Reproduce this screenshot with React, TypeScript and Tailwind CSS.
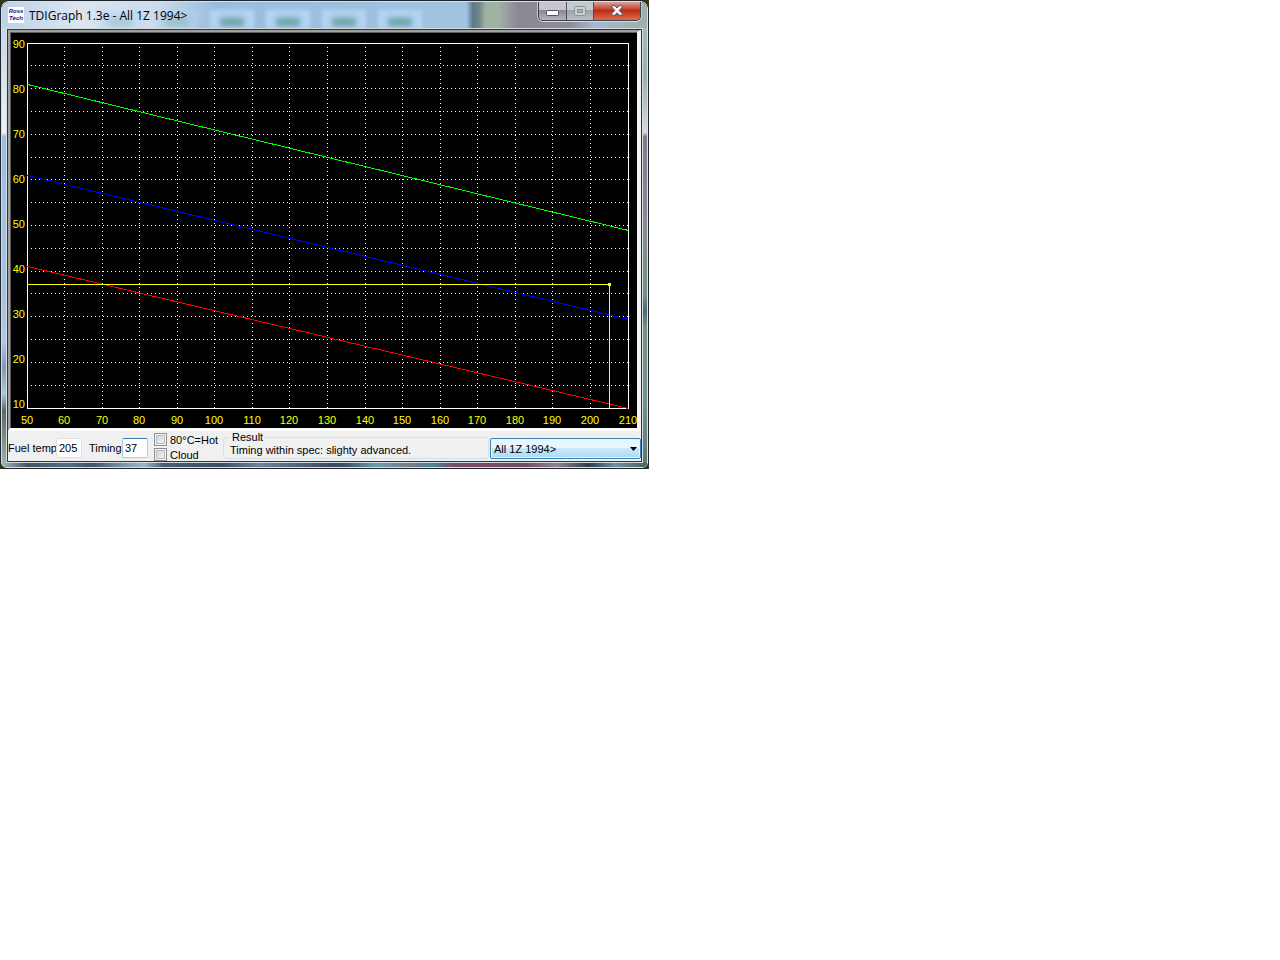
import React, { useState } from 'react';

const PLOT = { left: 16, top: 10, right: 617, bottom: 375 };

const toX = (temp: number) =>
  Math.floor(PLOT.left + ((temp - 50) * (PLOT.right - PLOT.left)) / 160) + 0.5;
const toY = (timing: number) =>
  Math.floor(PLOT.top + ((90 - timing) * (PLOT.bottom - PLOT.top)) / 80) + 0.5;

const range = (from: number, to: number, step: number) => {
  const values: number[] = [];
  for (let v = from; v <= to; v += step) values.push(v);
  return values;
};

const LIMITS = [
  { name: 'advanced', start: 81, end: 49, color: '#00ff00' },
  { name: 'nominal', start: 61, end: 29.5, color: '#0000ff' },
  { name: 'retarded', start: 41, end: 10, color: '#ff0000' },
];

const ENGINES = ['All 1Z 1994>', 'AHU 1996>', 'ALH 1999>'];

const limitAt = (index: number, temp: number) => {
  const { start, end } = LIMITS[index];
  return start + ((end - start) * (temp - 50)) / 160;
};

const getResult = (temp: number, timing: number) => {
  if (timing > limitAt(0, temp)) return 'Timing out of spec: too advanced.';
  if (timing < limitAt(2, temp)) return 'Timing out of spec: too retarded.';
  return timing > limitAt(1, temp)
    ? 'Timing within spec: slighty advanced.'
    : 'Timing within spec: slighty retarded.';
};

interface TimingChartProps {
  temp: number;
  timing: number;
}

const TimingChart: React.FC<TimingChartProps> = ({ temp, timing }) => {
  const px = toX(temp);
  const py = toY(timing);

  return (
    <svg viewBox="0 0 626 395" className="block w-full bg-black" role="img" aria-label="Timing chart">
      <g shapeRendering="crispEdges" fill="none">
        {/* Dotted grid */}
        <g stroke="#ffffff" strokeDasharray="1 3">
          {range(15, 85, 5).map((v) => (
            <line key={v} x1={20} x2={PLOT.right} y1={toY(v)} y2={toY(v)} />
          ))}
          {range(60, 200, 10).map((t) => (
            <line key={t} x1={toX(t)} x2={toX(t)} y1={14} y2={PLOT.bottom} />
          ))}
        </g>
        <rect x="16.5" y="10.5" width="601" height="365" stroke="#ffffff" />

        {LIMITS.map((limit) => (
          <line
            key={limit.name}
            x1={toX(50)}
            y1={toY(limit.start)}
            x2={toX(210)}
            y2={toY(limit.end)}
            stroke={limit.color}
          />
        ))}

        {/* Current reading */}
        <path d={`M17 ${py}H${px}V375`} stroke="#ffff00" />
        <rect x={px - 1.5} y={py - 1.5} width="3" height="3" fill="#ffff00" />
      </g>

      <g fill="#ffff00" fontSize="11" fontFamily='"Liberation Sans", Arial, sans-serif'>
        {range(10, 90, 10).map((v) => (
          <text key={v} x="14" y={15 + (90 - v) * 4.5} textAnchor="end">
            {v}
          </text>
        ))}
        {range(50, 210, 10).map((t) => (
          <text key={t} x={toX(t) - 0.5} y="391" textAnchor="middle">
            {t}
          </text>
        ))}
      </g>
    </svg>
  );
};

const WindowButtons: React.FC = () => (
  <div className="-mt-px mr-1.5 flex h-5 self-start overflow-hidden rounded-b-[5px] border border-t-0 border-[#3b4049] shadow-[0_1px_0_0_#d8dde6,1px_0_0_0_#c3c8d0,-1px_0_0_0_#c3c8d0]">
    <button
      type="button"
      aria-label="Minimize"
      className="flex w-7 items-center justify-center border-r border-[#4b505a] bg-linear-to-b from-[#c9c5cd] from-45% via-[#8c8995] via-50% to-[#b5b4bf]"
    >
      <svg viewBox="0 0 13 6" className="mt-1 h-1.5 w-[13px]">
        <rect x="0.5" y="0.5" width="12" height="5" rx="1" fill="#ffffff" stroke="#4d5166" />
      </svg>
    </button>
    <button
      type="button"
      aria-label="Maximize"
      className="flex w-[27px] items-center justify-center border-r border-[#4b505a] bg-linear-to-b from-[#c5cbcf] from-45% via-[#9ba6ad] via-50% to-[#b4c3c8]"
    >
      <svg viewBox="0 0 12 10" className="h-2.5 w-3">
        <rect x="0.5" y="0.5" width="11" height="9" rx="1" fill="#cbd1d3" stroke="#8a9296" />
        <rect x="3.5" y="3.5" width="5" height="3" fill="#a9b2b6" stroke="#8a9296" />
      </svg>
    </button>
    <button
      type="button"
      aria-label="Close"
      className="flex w-[46px] items-center justify-center bg-linear-to-b from-[#dda297] from-5% via-[#b92d13] via-50% to-[#e0694a]"
    >
      <svg viewBox="0 0 12 11" className="h-[11px] w-3">
        <path
          d="M0.7 0.7H4L6 3L8 0.7H11.3V2L8.2 5.4L11.3 8.8V10.2H8L6 7.8L4 10.2H0.7V8.8L3.8 5.4L0.7 2Z"
          fill="#ffffff"
          stroke="#54506a"
        />
      </svg>
    </button>
  </div>
);

const TitleBar: React.FC<{ title: string }> = ({ title }) => (
  <header className="relative flex h-[26px] items-center bg-[linear-gradient(90deg,#bdd2e6_0%,#dbe6f1_12%,#cbdcec_24%,#9bbddd_33%,#a0c3e0_72%,#5f7888_73%,#71888a_74%,#9fb2a4_75%,#9fb2a4_77%,#8c8893_80%,#8e8a98_88%,#a3bad8_92%,#a3b3bb_96%,#9db0aa_100%)] pl-1.5">
    {/* Blurred content showing through the glass */}
    <div aria-hidden="true" className="absolute inset-x-0 top-0 h-full overflow-hidden">
      <div className="flex gap-3 pt-2 pl-24">
        {[0, 1, 2, 3, 4, 5].map((i) => (
          <div
            key={i}
            className="flex h-5 w-11 shrink-0 items-center justify-center bg-[#b4d4f5] blur-[2px] nth-[-n+2]:opacity-40"
          >
            <div className="mt-1 h-2 w-6 bg-[#669f9d] blur-[2px]" />
          </div>
        ))}
      </div>
    </div>
    <div className="relative flex size-4 flex-col items-center justify-center bg-white font-['Liberation_Sans',sans-serif] text-[6px] leading-[7px] font-bold text-[#10107c] italic">
      <span>Ross</span>
      <span>Tech</span>
    </div>
    <h1 className="relative ml-[5px] flex-1 truncate pt-px font-['Open_Sans',sans-serif] text-[12px] leading-4 text-black">
      {title}
    </h1>
    <WindowButtons />
  </header>
);

const App: React.FC = () => {
  const [temp, setTemp] = useState('205');
  const [timing, setTiming] = useState('37');
  const [engine, setEngine] = useState(ENGINES[0]);

  return (
    <div className="min-h-screen bg-white">
      <div className="w-full max-w-[649px] bg-[#35351c]">
        <main className="overflow-hidden rounded-t-lg rounded-b-md border border-[#20242c]">
          <div className="overflow-hidden rounded-t-[7px] rounded-b-[5px] border border-[#d3e0e6]">
            <TitleBar title={`TDIGraph 1.3e - ${engine}`} />

            <div className="flex">
              <div className="w-1 bg-[linear-gradient(180deg,#c4d8ea_0%,#eef1f6_24%,#9dbfdf_25%,#a4c4e0_65%,#b0c8e8_72%,#8397b0_78%,#a8c8e0_84%,#5a6a64_88%,#9ab0ae_100%)]" />
              <div className="min-w-0 flex-1 border border-[#d3dde2]">
                <div className="border border-[#30353c] bg-[#f0f0f0] font-['Liberation_Sans',Arial,sans-serif] text-[11px] leading-3 text-black">
                  <div className="border-t-2 border-r-4 border-b-[3px] border-l-2 border-t-[#a0a0a0] border-r-[#f4f4f4] border-b-white border-l-[#a0a0a0]">
                    <div className="border-t border-l border-[#606060]">
                      <TimingChart temp={Number(temp)} timing={Number(timing)} />
                    </div>
                  </div>

                  <div className="flex h-[30px] items-center">
                    <label htmlFor="fuel-temp" className="w-12 pt-1 whitespace-nowrap">
                      Fuel temp
                    </label>
                    <input
                      id="fuel-temp"
                      value={temp}
                      onChange={(e) => setTemp(e.target.value)}
                      className="mt-1 h-5 w-[26px] rounded-xs border border-[#dcdfe6] bg-white px-0.5"
                    />
                    <label htmlFor="timing" className="ml-[7px] w-[33px] pt-1 whitespace-nowrap">
                      Timing
                    </label>
                    <input
                      id="timing"
                      value={timing}
                      onChange={(e) => setTiming(e.target.value)}
                      className="mt-1 h-5 w-[26px] rounded-xs border border-[#a9cde8] border-t-[#3d7bad] bg-white px-0.5"
                    />

                    <div className="ml-1.5 flex w-[69px] flex-col gap-0.5 pt-0.5">
                      {['80°C=Hot', 'Cloud'].map((name) => (
                        <label key={name} className="flex items-center gap-[3px] whitespace-nowrap">
                          <input
                            type="checkbox"
                            className="size-[13px] shrink-0 appearance-none border border-[#8e8f8f] bg-linear-to-br from-[#cbcfd5] to-[#f6f6f6] shadow-[inset_0_0_0_1px_#f4f4f4,inset_0_0_0_2px_#b8bcc2] checked:bg-[#4b5f9b]"
                          />
                          {name}
                        </label>
                      ))}
                    </div>

                    <fieldset className="h-7 min-w-0 flex-1 self-start rounded-[3px] border border-[#d5dfe5] pl-1.5">
                      <legend className="px-0.5">Result</legend>
                      <output className="block truncate pt-px">{getResult(Number(temp), Number(timing))}</output>
                    </fieldset>

                    <div className="relative mt-1 ml-px w-[151px]">
                      <select
                        aria-label="Engine"
                        value={engine}
                        onChange={(e) => setEngine(e.target.value)}
                        className="block h-[21px] w-full appearance-none rounded-xs border border-[#3c7fb1] bg-linear-to-b from-[#eaf6fd] from-45% via-[#c9e8fa] via-50% to-[#a9dbf6] pt-px pl-[3px] shadow-[inset_0_0_0_1px_#e6f5fc]"
                      >
                        {ENGINES.map((name) => (
                          <option key={name}>{name}</option>
                        ))}
                      </select>
                      <svg viewBox="0 0 7 4" className="pointer-events-none absolute top-[9px] right-1 h-1 w-[7px]">
                        <path d="M0 0H7L3.5 4Z" fill="#000000" />
                      </svg>
                    </div>
                  </div>
                </div>
              </div>
              <div className="w-1 bg-[linear-gradient(180deg,#a5bdb5_0%,#9aaeb0_11%,#d8d7de_24%,#807c8a_25%,#8d8896_45%,#7c9184_55%,#7b9188_61%,#506876_65%,#7b9186_69%,#78928a_85%,#5f7a72_100%)]" />
            </div>

            <div className="h-1 bg-[linear-gradient(90deg,#a5b8bd_0%,#425561_4%,#55707f_10%,#425365_14%,#7e98ab_19%,#9fb5c8_22%,#4b5e75_25%,#3d4e62_34%,#708399_40%,#3c4c60_51%,#3d4f61_53%,#66a0af_58%,#7b7c88_63%,#4a8496_67%,#7b4c68_70%,#724a63_81%,#8c8594_86%,#2e3e4b_91%,#6e91a5_95%,#4b625f_100%)]" />
          </div>
        </main>
      </div>
    </div>
  );
};

export default App;
